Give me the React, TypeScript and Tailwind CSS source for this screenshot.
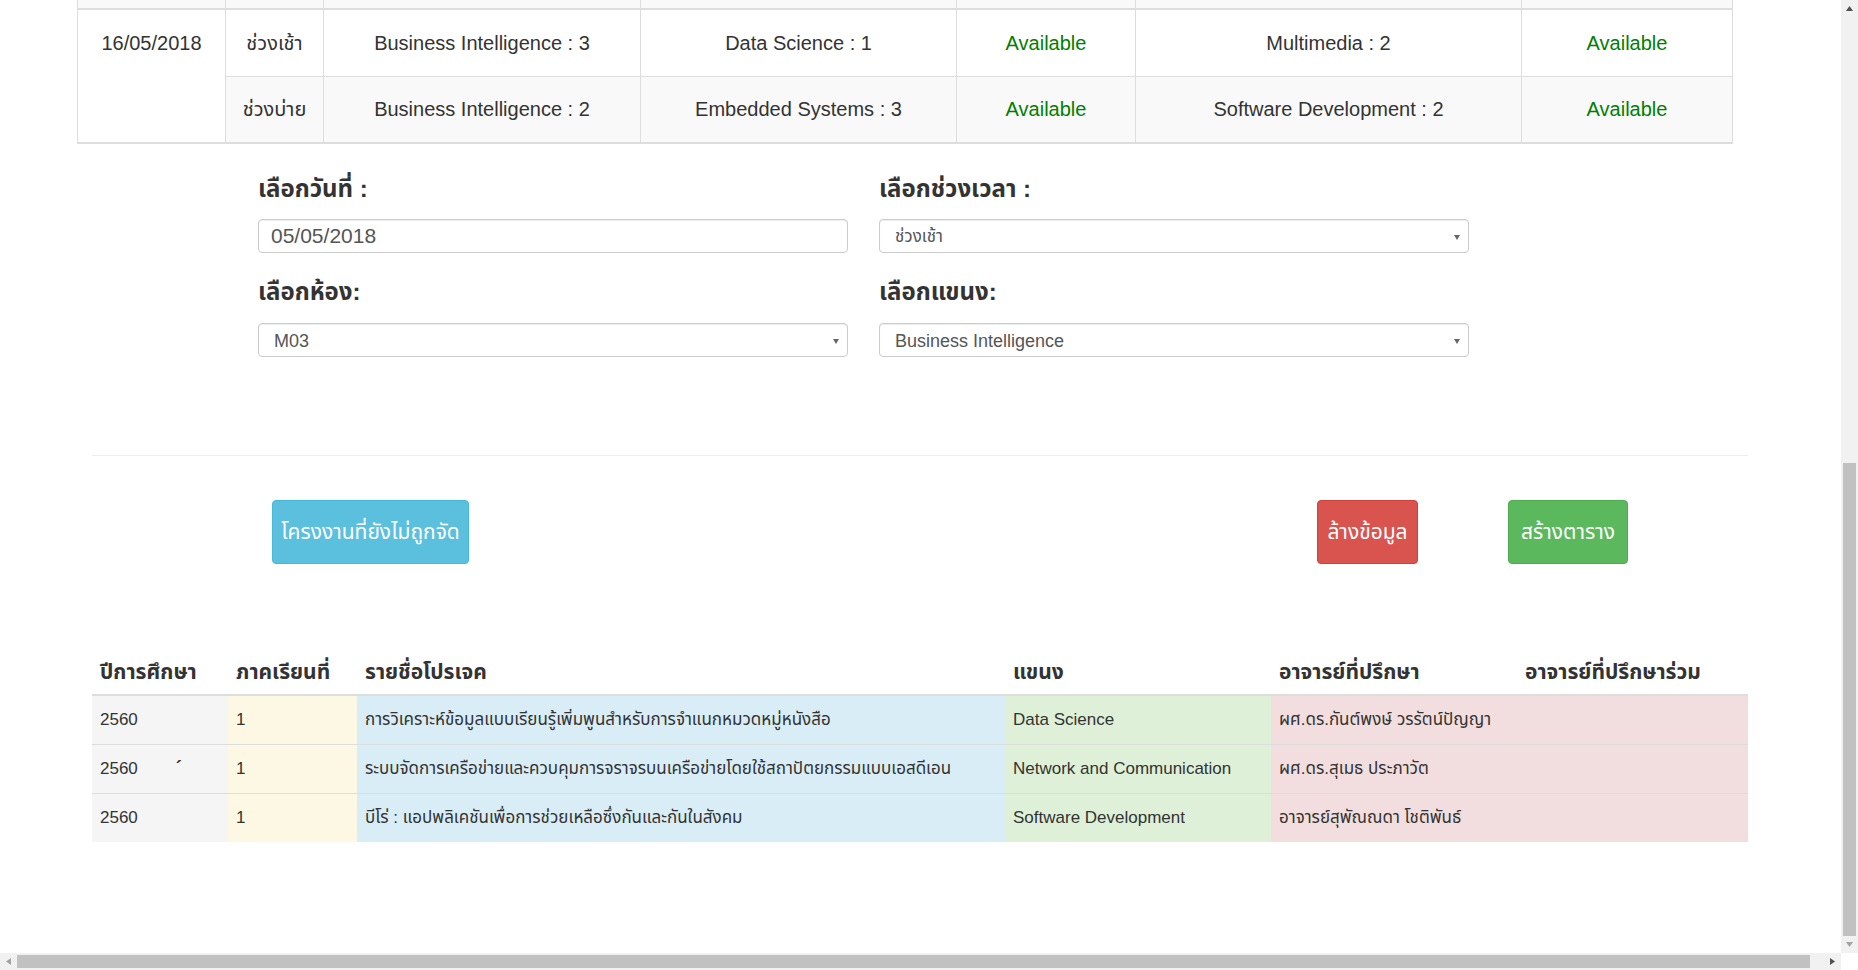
import React from "react";

const FONT = "font-['Liberation_Sans','Noto_Sans_Thai','Noto_Sans',sans-serif]";

function Tri({ dir, color }: { dir: "up" | "down" | "left" | "right"; color: string }) {
  const pts =
    dir === "up"
      ? "0,5 7,5 3.5,0"
      : dir === "down"
      ? "0,0 7,0 3.5,5"
      : dir === "left"
      ? "5,0 5,7 0,3.5"
      : "0,0 0,7 5,3.5";
  const w = dir === "up" || dir === "down" ? 7 : 5;
  const h = dir === "up" || dir === "down" ? 5 : 7;
  return (
    <svg width={w} height={h} viewBox={`0 0 ${w} ${h}`}>
      <polygon points={pts} fill={color} />
    </svg>
  );
}

function SelectBox({ text }: { text: string }) {
  return (
    <div className="mt-[16px] flex h-[34px] items-center justify-between rounded-[4px] border border-[#ccc] bg-white pl-[15px] pr-[8px] pt-[2px] shadow-[inset_0_1px_1px_rgba(0,0,0,0.075)]">
      <span className="text-[18px] text-[#555]">{text}</span>
      <svg width="6" height="5" viewBox="0 0 6 5">
        <polygon points="0,0 6,0 3,5" fill="#666" />
      </svg>
    </div>
  );
}

export default function App() {
  const td = "border border-[#ddd] align-middle";
  const green = "text-[#008000]";
  const rows = [
    {
      y: "2560",
      mark: false,
      t: "1",
      name: "การวิเคราะห์ข้อมูลแบบเรียนรู้เพิ่มพูนสำหรับการจำแนกหมวดหมู่หนังสือ",
      track: "Data Science",
      adv: "ผศ.ดร.กันต์พงษ์ วรรัตน์ปัญญา",
    },
    {
      y: "2560",
      mark: true,
      t: "1",
      name: "ระบบจัดการเครือข่ายและควบคุมการจราจรบนเครือข่ายโดยใช้สถาปัตยกรรมแบบเอสดีเอน",
      track: "Network and Communication",
      adv: "ผศ.ดร.สุเมธ ประภาวัต",
    },
    {
      y: "2560",
      mark: false,
      t: "1",
      name: "บีโร่ : แอปพลิเคชันเพื่อการช่วยเหลือซึ่งกันและกันในสังคม",
      track: "Software Development",
      adv: "อาจารย์สุพัณณดา โชติพันธ์",
    },
  ];

  return (
    <div className={`${FONT} flex h-[970px] w-[1858px] flex-col overflow-hidden bg-white text-[#333]`}>
      <div className="flex h-[953px]">
        {/* main */}
        <div className="w-[1841px] overflow-hidden">
          {/* top table */}
          <table className="ml-[77px] w-[1655px] table-fixed border-collapse text-center text-[20px]">
            <colgroup>
              <col className="w-[148px]" />
              <col className="w-[98px]" />
              <col className="w-[317px]" />
              <col className="w-[316px]" />
              <col className="w-[179px]" />
              <col className="w-[386px]" />
              <col className="w-[211px]" />
            </colgroup>
            <tbody>
              <tr className="h-[9px] bg-[#f9f9f9]">
                <td className="border-x border-[#ddd] p-0"></td>
                <td className="border-x border-[#ddd] p-0"></td>
                <td className="border-x border-[#ddd] p-0"></td>
                <td className="border-x border-[#ddd] p-0"></td>
                <td className="border-x border-[#ddd] p-0"></td>
                <td className="border-x border-[#ddd] p-0"></td>
                <td className="border-x border-[#ddd] p-0"></td>
              </tr>
            </tbody>
            <tbody className="border-y-2 border-[#ddd]">
              <tr className="h-[67px] bg-white">
                <td rowSpan={2} className="border border-[#ddd] pt-[18px] align-top">
                  16/05/2018
                </td>
                <td className={td}>ช่วงเช้า</td>
                <td className={td}>Business Intelligence : 3</td>
                <td className={td}>Data Science : 1</td>
                <td className={`${td} ${green}`}>Available</td>
                <td className={td}>Multimedia : 2</td>
                <td className={`${td} ${green}`}>Available</td>
              </tr>
              <tr className="h-[67px] bg-[#f9f9f9]">
                <td className={td}>ช่วงบ่าย</td>
                <td className={td}>Business Intelligence : 2</td>
                <td className={td}>Embedded Systems : 3</td>
                <td className={`${td} ${green}`}>Available</td>
                <td className={td}>Software Development : 2</td>
                <td className={`${td} ${green}`}>Available</td>
              </tr>
            </tbody>
          </table>

          {/* form */}
          <div className="ml-[258px] mt-[29px] flex gap-[31px]">
            <div className="w-[590px]">
              <div className="h-[31px] text-[24px] font-bold leading-[31px]">เลือกวันที่ :</div>
              <div className="mt-[15px] flex h-[34px] items-center rounded-[4px] border border-[#ccc] bg-white px-[12px] text-[21px] text-[#555] shadow-[inset_0_1px_1px_rgba(0,0,0,0.075)]">
                05/05/2018
              </div>
              <div className="mt-[23px] h-[31px] text-[24px] font-bold leading-[31px]">เลือกห้อง:</div>
              <SelectBox text="M03" />
            </div>
            <div className="w-[590px]">
              <div className="h-[31px] text-[24px] font-bold leading-[31px]">เลือกช่วงเวลา :</div>
              <div className="mt-[15px] flex h-[34px] items-center justify-between rounded-[4px] border border-[#ccc] bg-white pl-[15px] pr-[8px] pt-[2px] shadow-[inset_0_1px_1px_rgba(0,0,0,0.075)]">
                <span className="text-[17px] text-[#555]">ช่วงเช้า</span>
                <svg width="6" height="5" viewBox="0 0 6 5">
                  <polygon points="0,0 6,0 3,5" fill="#666" />
                </svg>
              </div>
              <div className="mt-[23px] h-[31px] text-[24px] font-bold leading-[31px]">เลือกแขนง:</div>
              <SelectBox text="Business Intelligence" />
            </div>
          </div>

          {/* hr */}
          <div className="ml-[92px] mt-[98px] w-[1656px] border-t border-[#eee]"></div>

          {/* buttons */}
          <div className="ml-[272px] mt-[44px] flex h-[64px]">
            <div className="flex w-[197px] items-center justify-center rounded-[4px] border border-[#46b8da] bg-[#5bc0de] text-[21px] text-white">
              โครงงานที่ยังไม่ถูกจัด
            </div>
            <div className="ml-[848px] flex w-[101px] items-center justify-center rounded-[4px] border border-[#d43f3a] bg-[#d9534f] text-[21px] text-white">
              ล้างข้อมูล
            </div>
            <div className="ml-[90px] flex w-[120px] items-center justify-center rounded-[4px] border border-[#4cae4c] bg-[#5cb85c] text-[21px] text-white">
              สร้างตาราง
            </div>
          </div>

          {/* bottom table */}
          <table className="ml-[92px] mt-[85px] w-[1656px] table-fixed border-collapse text-left">
            <colgroup>
              <col className="w-[136px]" />
              <col className="w-[129px]" />
              <col className="w-[648px]" />
              <col className="w-[266px]" />
              <col className="w-[246px]" />
              <col className="w-[231px]" />
            </colgroup>
            <thead>
              <tr className="h-[46px] border-b-2 border-[#ddd] text-[21px] font-bold">
                <th className="px-[8px] align-middle">ปีการศึกษา</th>
                <th className="px-[8px] align-middle">ภาคเรียนที่</th>
                <th className="px-[8px] align-middle">รายชื่อโปรเจค</th>
                <th className="px-[8px] align-middle">แขนง</th>
                <th className="px-[8px] align-middle">อาจารย์ที่ปรึกษา</th>
                <th className="px-[8px] align-middle">อาจารย์ที่ปรึกษาร่วม</th>
              </tr>
            </thead>
            <tbody className="text-[17px]">
              {rows.map((r, i) => (
                <tr key={i} className={`h-[49px] ${i > 0 ? "border-t border-[#ddd]" : ""}`}>
                  <td className="bg-[#f5f5f5] px-[8px] align-middle">
                    {r.y}
                    {r.mark && <span className="ml-[38px] text-[18px] font-bold">´</span>}
                  </td>
                  <td className="bg-[#fcf8e3] px-[8px] align-middle">{r.t}</td>
                  <td className="whitespace-nowrap bg-[#d9edf7] px-[8px] align-middle">{r.name}</td>
                  <td className="bg-[#dff0d8] px-[8px] align-middle">{r.track}</td>
                  <td className="bg-[#f2dede] px-[8px] align-middle">{r.adv}</td>
                  <td className="bg-[#f2dede] px-[8px] align-middle"></td>
                </tr>
              ))}
            </tbody>
          </table>
        </div>

        {/* vertical scrollbar */}
        <div className="flex w-[17px] flex-col bg-[#f1f1f1]">
          <div className="flex h-[17px] items-center justify-center">
            <Tri dir="up" color="#505050" />
          </div>
          <div className="h-[446px]"></div>
          <div className="mx-[2px] h-[473px] bg-[#c1c1c1]"></div>
          <div className="flex h-[17px] items-center justify-center">
            <Tri dir="down" color="#a3a3a3" />
          </div>
        </div>
      </div>

      {/* horizontal scrollbar */}
      <div className="flex h-[17px]">
        <div className="flex w-[1841px] bg-[#f1f1f1]">
          <div className="flex w-[17px] items-center justify-center">
            <Tri dir="left" color="#a3a3a3" />
          </div>
          <div className="my-[2px] w-[1793px] bg-[#c1c1c1]"></div>
          <div className="w-[14px]"></div>
          <div className="flex w-[17px] items-center justify-center">
            <Tri dir="right" color="#505050" />
          </div>
        </div>
        <div className="w-[17px] bg-white"></div>
      </div>
    </div>
  );
}
